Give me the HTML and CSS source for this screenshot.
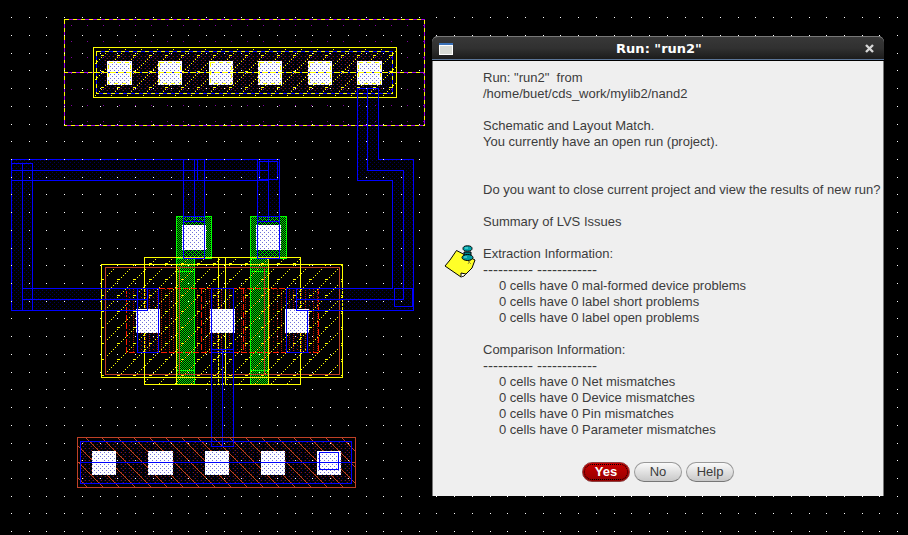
FILE: index.html
```html
<!DOCTYPE html>
<html lang="en">
<head>
<meta charset="utf-8">
<title>Run: "run2"</title>
<link rel="stylesheet" href="styles.css">
</head>
<body>
<main class="desktop">
<svg class="layout" role="img" aria-label="NAND layout" shape-rendering="crispEdges">
  <defs>
    <pattern id="metal" width="4" height="4" patternUnits="userSpaceOnUse">
      <rect class="px-metal" width="1" height="1"/><rect class="px-metal" x="2" y="2" width="1" height="1"/>
    </pattern>
    <pattern id="diff" width="12" height="4" patternUnits="userSpaceOnUse">
      <path class="px-red" d="M1 1h1v1h-1zM1 3h1v1h-1zM5 0h1v1h-1zM5 2h1v1h-1zM9 1h1v1h-1z"/>
    </pattern>
    <pattern id="pdiff" width="8" height="4" patternUnits="userSpaceOnUse">
      <path class="px-brown" d="M1 0h1v1h-1zM3 2h1v1h-1zM5 0h1v1h-1z"/>
    </pattern>
    <pattern id="poly" width="4" height="4" patternUnits="userSpaceOnUse">
      <path class="px-green" d="M0 0h1v1h-1zM2 0h1v1h-1zM1 1h1v1h-1zM3 1h1v1h-1zM0 2h1v1h-1zM2 2h1v1h-1zM1 3h1v1h-1zM3 3h1v1h-1z"/>
    </pattern>
    <pattern id="hatch" width="16" height="16" patternUnits="userSpaceOnUse">
      <path class="px-yellow" d="M5 7h3v1h-3zM9 5h1v1h-1zM11 3h1v1h-1zM13 1h1v1h-1zM15 15h1v1h-1zM1 13h1v1h-1zM3 11h1v1h-1zM5 9h1v1h-1z"/>
    </pattern>
    <pattern id="slash" width="16" height="16" patternUnits="userSpaceOnUse">
      <path class="brown" d="M-1 -1L17 17"/>
    </pattern>
    <pattern id="well" x="71" y="25" width="16" height="16" patternUnits="userSpaceOnUse">
      <path class="px-purple" d="M0 0h1v1h-1z"/>
    </pattern>
    <pattern id="cut" width="4" height="4" patternUnits="userSpaceOnUse">
      <rect class="px-white" width="4" height="4"/>
      <rect class="px-cut" width="1" height="1"/><rect class="px-cut" x="2" y="2" width="1" height="1"/>
    </pattern>
  </defs>

  <!-- n-well -->
  <rect x="64" y="19" width="361" height="107" fill="url(#well)"/>
  <path class="purple" d="M64.5 19.5H424.5V125.5H64.5ZM64 72.5H425"/>
  <path class="yellow dash" d="M64.5 19.5H424.5V125.5H64.5ZM64 72.5H425"/>

  <!-- well tap -->
  <rect x="97" y="52" width="295" height="41" fill="url(#metal)"/>
  <rect x="105" y="54" width="280" height="38" fill="url(#pdiff)"/>
  <rect x="94" y="48" width="302" height="49" fill="url(#hatch)"/>
  <path class="yellow" d="M93.500 47.500H396.500V97.500H93.500Z"/>
  <path class="blue" d="M96.500 51.500H392.500V93.500H96.500Z"/>
  <path class="yellow dash" d="M96.500 51.500H392.500V93.500H96.500Z"/>
  <path fill="url(#cut)" d="M107 61h25v24h-25zM158 61h24v24h-24zM209 61h24v24h-24zM258 61h24v24h-24zM308 61h24v24h-24zM357 61h25v24h-25z"/>
  <path class="yellow dash" d="M108.500 62.500h22v21h-22zM159.500 62.500h21v21h-21zM210.500 62.500h21v21h-21zM259.500 62.500h21v21h-21zM309.500 62.500h21v21h-21zM358.500 62.500h22v21h-22z"/>
  <path class="blue" d="M97 72.500H392"/>
  <path class="yellow longdash" d="M94 72.500H396"/>

  <!-- poly gates -->
  <path class="green" fill="url(#poly)" d="M176.500 216.500H211.500V258.500H194.500V384.500H176.500ZM250.500 216.500H286.500V258.500H268.500V384.500H250.500Z"/>
  <path class="green" d="M176 258.500H212M250 258.500H287M176 271.500H195M250 271.500H269M176 288.500H195M250 288.500H269M176 352.500H195M250 352.500H269M176 370.500H195M250 370.500H269"/>

  <!-- transistors -->
  <path fill="url(#diff)" d="M127 289H176V352H127ZM195 289H250V352H195ZM269 289H318V352H269Z"/>
  <path fill="url(#hatch)" d="M102 265H144V258H300V265H342V377H300V384H144V377H102Z"/>
  <path class="red longdash" d="M126.500 288.500H318.500V352.500H126.500ZM201.500 288V352M243.500 288V352"/>
  <path class="brown" d="M105.500 267.500H339.500V374.500H105.500ZM179.500 267V374M264.500 267V374"/>
  <path class="yellow" d="M101.500 264.500H342.500V377.500H101.500ZM144.500 257.500H300.500V384.500H144.500ZM218.500 257V384M225.500 257V384M176.500 264V384M268.500 258V384"/>

  <!-- metal fills -->
  <path fill="url(#metal)" d="M11 159H279V258H257V180H204V258H183V180H32V288H158V352H137V310H11ZM357 88H378V159H413V310H308V352H286V288H392V180H357ZM211 288H233V446H211ZM80 441H351V483H80Z"/>

  <!-- contacts -->
  <path fill="url(#cut)" d="M182 225h24v25h-24zM256 225h25v25h-25zM136 309h24v24h-24zM210 309h25v24h-25zM285 309h24v24h-24z"/>

  <!-- metal wires -->
  <path class="blue" d="M11.500 310.500V159.500H279.500V258.500H257.500V159.500M11 163.500H32.500V310M22.500 163V310M11 170.500H268M11 180.500H268M183.500 159V258.500H204.500V159M194.500 159V221M197.500 159V180M183 216.500H205M183 221.500H205M268.500 159V221M257 216.500H280M257 221.500H280M259.500 161.500H277.500V179.500H259.500ZM22 288.500H158.500V352.500H137.500V288M11 310.500H147.500V288M22 299.500H147"/>
  <path class="blue" d="M357.500 88.500H378.500V159.500H413.500V310.500H296.500V288M357.500 88V180.500H392.500V288.500H286.500V352.500H308.500M367.500 88V170.500H403.500V299.500H296M394.500 288.500H412.500V306.500H394.500ZM307.500 310V352M211.500 288.500H233.500V446.500H211.500ZM222.500 349V446M211 349.500H233M211 352.500H233"/>

  <!-- substrate tap -->
  <rect x="80" y="441" width="271" height="42" fill="url(#pdiff)"/>
  <rect x="78" y="438" width="277" height="49" fill="url(#slash)"/>
  <path class="brown" d="M77.500 437.500H355.500V487.500H77.500ZM77 462.500H355"/>
  <path fill="url(#cut)" d="M92 451h24v24h-24zM148 451h25v24h-25zM205 451h24v24h-24zM261 451h24v24h-24zM317 451h24v24h-24z"/>
  <path class="blue" d="M80.500 441.500H351.500V483.500H80.500ZM81 462.500H351M319.500 452.500H338.500V469.500H319.500ZM211 446.500H233"/>

  <path id="grid" class="px-white"/>
</svg>

<section class="dialog" role="dialog" aria-labelledby="dialog-title">
  <header class="titlebar">
    <svg class="window-icon" width="14" height="12" aria-hidden="true" shape-rendering="crispEdges">
      <rect width="14" height="12" fill="#fff"/><rect width="14" height="2" fill="#3b72b8"/><rect x="1" y="3" width="12" height="8" fill="#d9dbd5"/>
    </svg>
    <h1 class="title" id="dialog-title">Run: "run2"</h1>
    <button class="close" type="button" aria-label="Close">
      <svg width="9" height="9" viewBox="0 0 9 9" aria-hidden="true"><path d="M1 1L8 8M8 1L1 8" stroke="#d6d6d6" stroke-width="2.400"/></svg>
    </button>
  </header>
  <div class="content">
    <svg class="note" width="32" height="34" viewBox="0 0 32 34" aria-hidden="true">
      <path d="M12.500 5.500L31 15L28 23L20 31L17 32L1 21L6 15Z" fill="#ffff28" stroke="#000"/>
      <path d="M17 32L17 28L22 29" fill="#fff" stroke="#000"/>
      <path d="M23 15l4 4M27 14l-3 5" stroke="#9a9a30"/>
      <path d="M20 7h7v5h-7z" fill="#007f88" stroke="#000"/>
      <ellipse cx="23.500" cy="3.500" rx="4.500" ry="2.700" fill="#00a5ab" stroke="#000"/>
      <ellipse cx="23.500" cy="12.500" rx="5.500" ry="3" fill="#009ca2" stroke="#000"/>
      <path d="M21 3h3M20 12h3" stroke="#75e4e6"/>
    </svg>
    <div class="message">
      <p>Run: "run2"&nbsp; from<br>/home/buet/cds_work/mylib2/nand2</p>
      <p>Schematic and Layout Match.<br>You currently have an open run (project).</p>
      <p class="question">Do you want to close current project and view the results of new run?</p>
      <p>Summary of LVS Issues</p>
      <h2>Extraction Information:</h2>
      <div class="rule">---------- ------------</div>
      <ul>
        <li>0 cells have 0 mal-formed device problems</li>
        <li>0 cells have 0 label short problems</li>
        <li>0 cells have 0 label open problems</li>
      </ul>
      <h2>Comparison Information:</h2>
      <div class="rule">---------- ------------</div>
      <ul>
        <li>0 cells have 0 Net mismatches</li>
        <li>0 cells have 0 Device mismatches</li>
        <li>0 cells have 0 Pin mismatches</li>
        <li>0 cells have 0 Parameter mismatches</li>
      </ul>
    </div>
  </div>
  <footer class="actions">
    <button class="btn primary" type="button">Yes</button>
    <button class="btn" type="button">No</button>
    <button class="btn" type="button">Help</button>
  </footer>
</section>
</main>
<script src="grid.js"></script>
</body>
</html>
```
FILE: styles.css
```css
* { box-sizing: border-box; }
body { margin: 0; background: #000; }
.desktop { position: relative; min-height: 100vh; overflow: hidden; }
.layout { position: absolute; inset: 0; width: 100%; height: 100%; fill: none; }

.blue { stroke: #0000ff; }
.yellow { stroke: #ffff00; }
.purple { stroke: #9900e6; }
.green { stroke: #00ff00; }
.red { stroke: #ff1a00; }
.brown { stroke: #bf4026; }
.dash { stroke-dasharray: 4 4; }
.longdash { stroke-dasharray: 6 2; }
.px-metal { fill: #000058; }
.px-cut { fill: #7070d8; }
.px-red { fill: #b01800; }
.px-brown { fill: #802010; }
.px-green { fill: #00e600; }
.px-yellow { fill: #ffff00; }
.px-purple { fill: #8000a0; }
.px-white { fill: #fff; }

.dialog {
  position: absolute;
  left: 432px;
  top: 36px;
  width: 452px;
  border: 1px solid #777;
  border-top: 0;
  border-bottom: 0;
  border-radius: 6px 6px 0 0;
  background: #efefef;
  color: #3c3c3c;
  font: 13px/16px "Liberation Sans", Arial, sans-serif;
}
.titlebar {
  display: flex;
  align-items: center;
  height: 25px;
  margin: 0 -1px;
  padding: 0 10px 0 7px;
  border-top: 1px solid #777;
  border-bottom: 1px solid #000;
  border-radius: 6px 6px 0 0;
  background: linear-gradient(#383838, #303030 50%, #1a1a1a);
  box-shadow: inset 0 -1px #5b7598;
}
.window-icon { display: block; }
.title {
  flex: 1;
  margin: 0;
  color: #fff;
  font: bold 13px/22px "DejaVu Sans", sans-serif;
  text-align: center;
}
.close { display: flex; padding: 0; border: 0; background: none; }
.content { display: flex; gap: 7px; padding: 9px 2px 0 11px; }
.note { flex: none; margin-top: 175px; }
.message { white-space: nowrap; }
.message p { margin: 0 0 16px; }
.message .question { margin-top: 32px; }
.message h2 { margin: 0; font: inherit; }
.message .rule { font-size: 15px; }
.message ul { margin: 0 0 16px; padding: 0 0 0 16px; list-style: none; }
.actions { display: flex; justify-content: center; gap: 4px; padding: 8px 0 14px; }
.btn {
  width: 48px;
  height: 20px;
  padding: 0;
  border: 1px solid #999;
  border-bottom-color: #777;
  border-radius: 10px;
  background: linear-gradient(#fafafa, #c8c8c8);
  color: #3c3c3c;
  font: inherit;
}
.btn.primary {
  border-color: #8c4040;
  background: linear-gradient(#c80000, #960000);
  outline: 1px dotted #000;
  outline-offset: -3px;
  color: #fff;
  font-weight: bold;
}
```
FILE: grid.js
```js
// Snap points of the layout editor, about 17.72px apart.
const PITCH = 17.7225;
let dots = "";
for (let row = 0; row < 60; row++) {
  for (let col = 0; col < 110; col++) {
    dots += `M${Math.floor(11.55 + col * PITCH)} ${Math.floor(17.68 + row * PITCH)}h1v1h-1z`;
  }
}
document.getElementById("grid").setAttribute("d", dots);
```
